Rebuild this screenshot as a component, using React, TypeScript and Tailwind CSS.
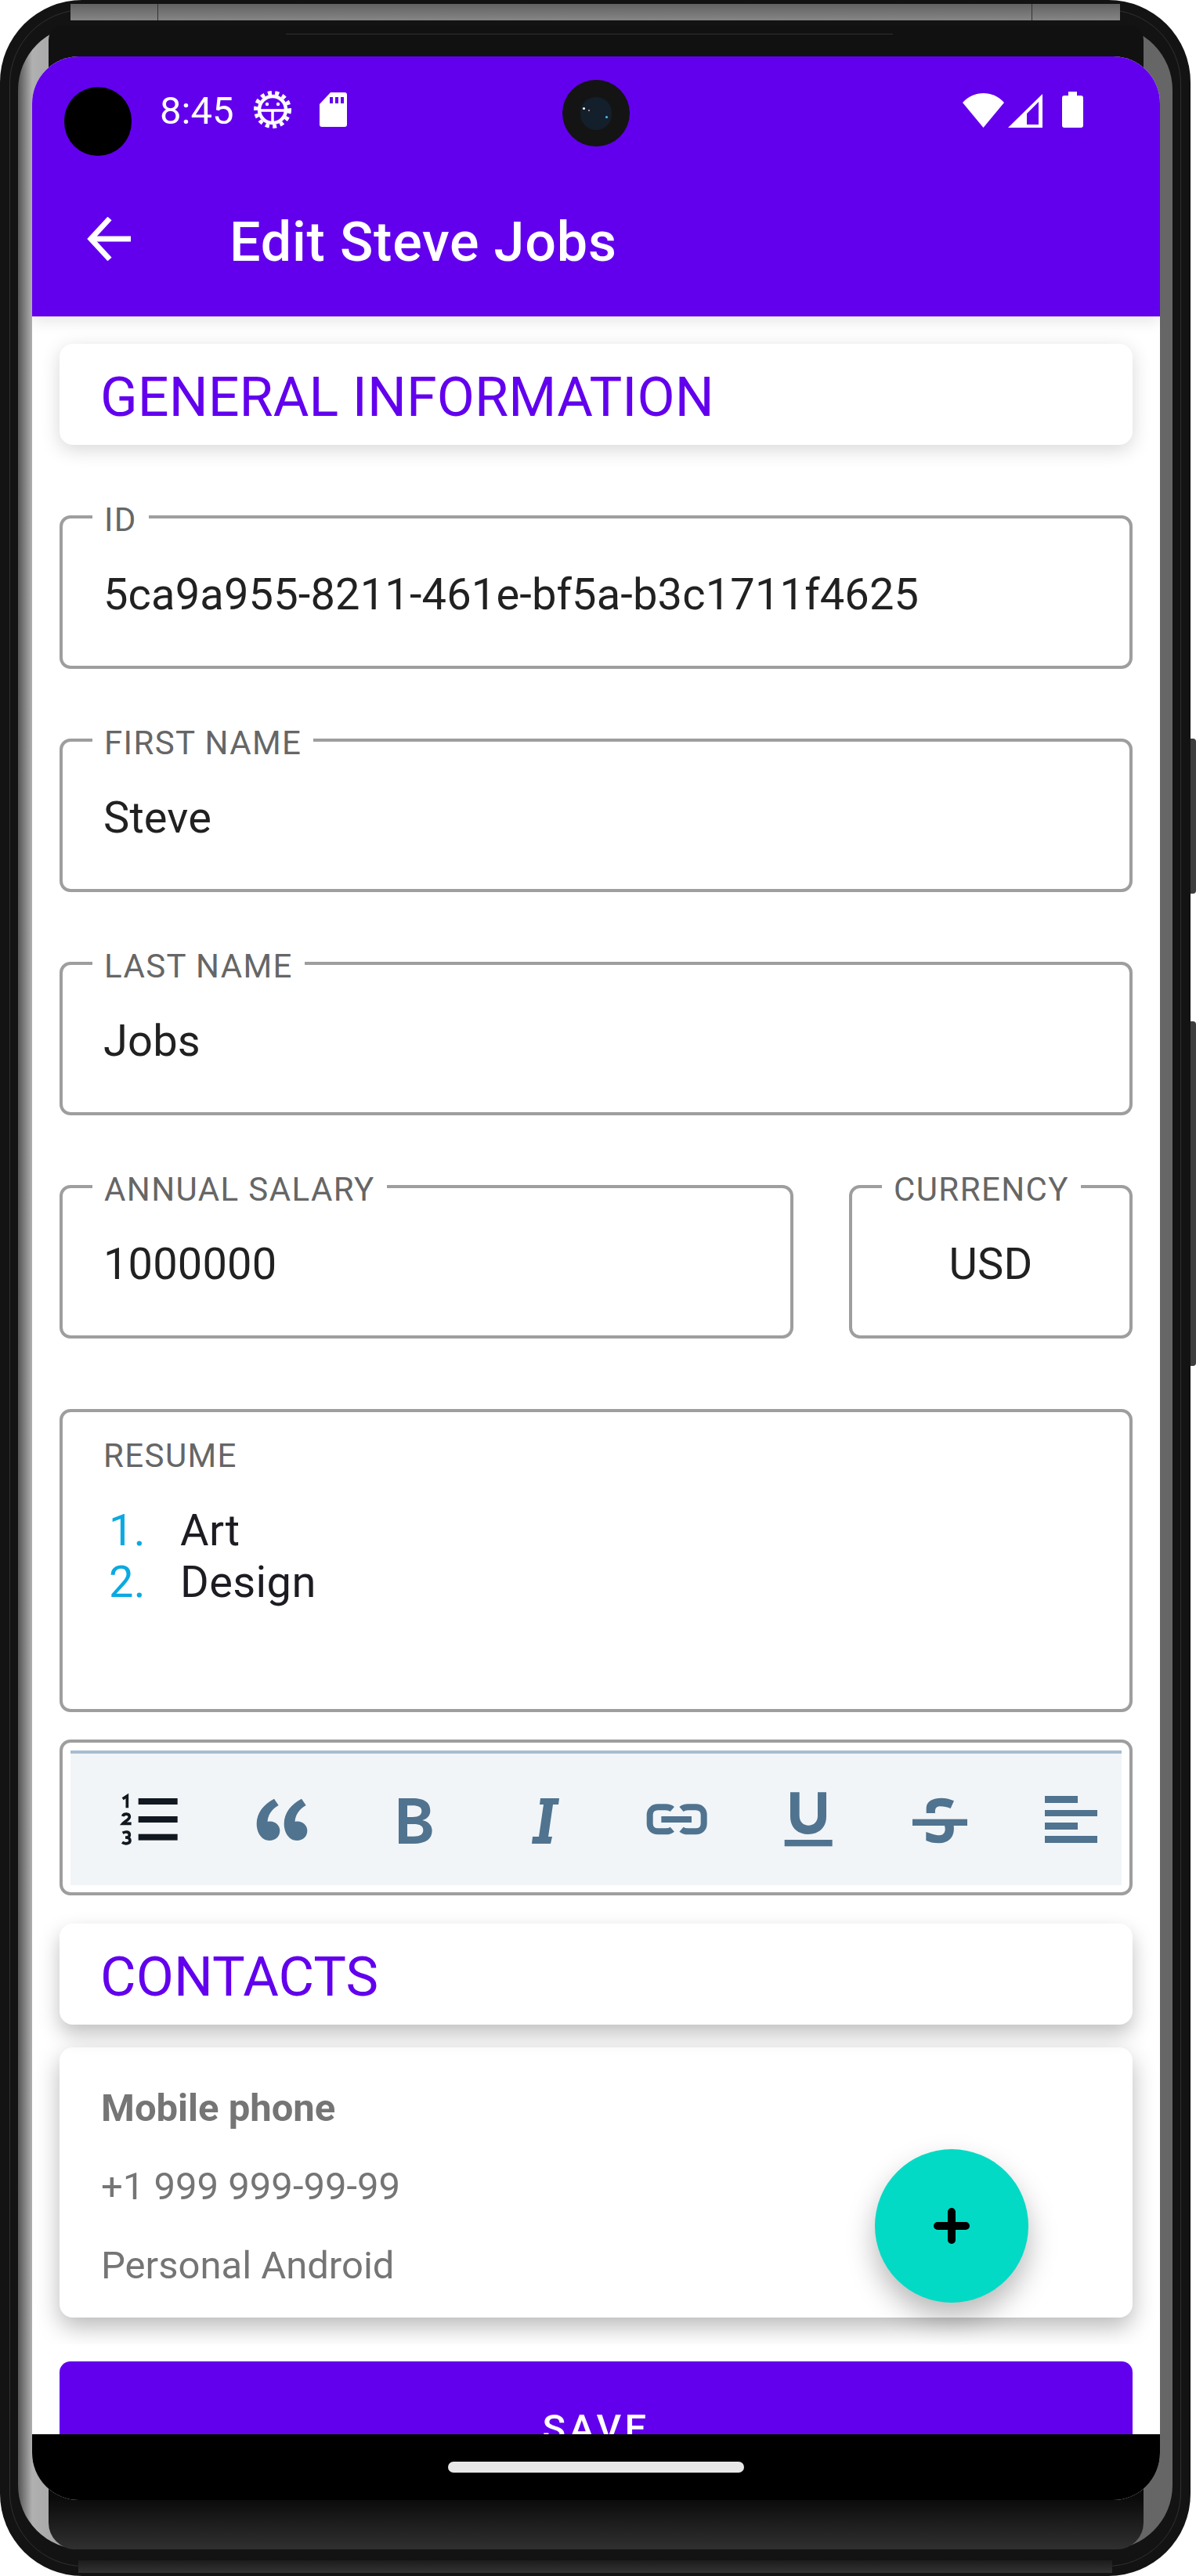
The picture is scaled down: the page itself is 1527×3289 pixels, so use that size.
const roboto = "font-['Roboto',sans-serif]";

function Field({ label, value, className = "", center = false }: { label: string; value: string; className?: string; center?: boolean }) {
  return (
    <div className={`relative h-[196px] rounded-[14px] border-4 border-[#9e9e9e] ${className}`}>
      <span className="absolute top-[-19px] left-[38px] bg-white px-[15px] text-[42px] leading-[42px] tracking-[1.4px] text-[#666666] whitespace-nowrap">
        {label}
      </span>
      <div className={`pt-[64px] text-[56px] leading-[66px] tracking-[0.15px] text-[#212121] ${center ? "text-center" : "pl-[52px]"}`}>
        {value}
      </div>
    </div>
  );
}

function SectionTitle({ children, className = "" }: { children: string; className?: string }) {
  return (
    <div className={`h-[129px] rounded-[17px] bg-white pl-[52px] pt-[4px] text-[70px] leading-[129px] tracking-[0.1px] text-[#6200ee] ${className}`}>
      {children}
    </div>
  );
}

function ToolIcon({ box, children }: { box: string; children: React.ReactNode }) {
  return (
    <div className="flex w-[168px] shrink-0 justify-center">
      <svg width="84" height="84" viewBox={box} fill="#50738f">
        {children}
      </svg>
    </div>
  );
}

function Toolbar() {
  return (
    <div className="mt-[35px] h-[199px] rounded-[14px] border-4 border-[#9e9e9e] px-[10px] pt-[10px]">
      <div className="flex h-[172px] overflow-hidden border-t-[4px] border-[#a7bdd0] bg-[#f1f5f8] pl-[18px] pt-[42px]">
        <ToolIcon box="60 63 252 252">
          <g fill="none" stroke="#111820" strokeWidth="11">
            <path d="M80 110 L97 99 V145" />
            <path d="M80 177 C84 165 106 165 106 179 C106 189 90 195 81 205 H113" />
            <path d="M80 241 C90 235 106 235 106 248 C106 257 94 258 90 258 C101 258 108 262 108 270 C108 283 88 284 78 277" />
          </g>
          <g fill="#111820">
            <rect x="140" y="108" width="150" height="24" />
            <rect x="140" y="177" width="150" height="24" />
            <rect x="140" y="245" width="150" height="24" />
          </g>
        </ToolIcon>
        <ToolIcon box="564 63 252 252">
          <path d="M660 110 L677 135 C650 150 635 175 635 198 C660 192 682 210 682 232 C682 255 665 270 642 270 C612 270 593 240 593 205 C593 165 620 130 660 110 Z" />
          <path d="M765 110 L782 135 C755 150 740 175 740 198 C765 192 787 210 787 232 C787 255 770 270 747 270 C717 270 698 240 698 205 C698 165 725 130 765 110 Z" />
        </ToolIcon>
        <ToolIcon box="1068 63 252 252">
          <path
            fillRule="evenodd"
            d="M1137 108 H1190 C1240 108 1258 128 1258 155 C1258 175 1245 187 1228 192 C1250 196 1265 212 1265 232 C1265 265 1240 282 1195 282 H1137 Z M1170 136 V180 H1190 C1215 180 1225 172 1225 157 C1225 142 1213 136 1190 136 Z M1170 207 V254 H1195 C1220 254 1231 245 1231 230 C1231 215 1220 207 1193 207 Z"
          />
        </ToolIcon>
        <ToolIcon box="654 2281 84 84">
          <path d="M690 2296 H714 L713 2304 H706 L700 2345 H705 L703 2354 H679 L680 2345 H688 L694 2304 H689 Z" />
        </ToolIcon>
        <ToolIcon box="96 63 252 252">
          <g fill="none" stroke="#50738f" strokeWidth="24">
            <path d="M205 150 C198 144 190 142 180 142 H150 C130 142 119 155 119 172 V205 C119 222 130 235 150 235 H180 C190 235 198 233 205 227" />
            <path d="M240 150 C247 144 255 142 265 142 H295 C315 142 326 155 326 172 V205 C326 222 315 235 295 235 H265 C255 235 247 233 240 227" />
          </g>
          <rect x="163" y="177" width="116" height="24" />
        </ToolIcon>
        <ToolIcon box="600 63 252 252">
          <path d="M657 85 H692 V175 C692 200 708 212 727 212 C746 212 762 200 762 175 V85 H795 V178 C795 222 765 246 726 246 C687 246 657 222 657 178 Z" />
          <rect x="635" y="267" width="183" height="25" />
        </ToolIcon>
        <ToolIcon box="1104 63 252 252">
          <rect x="1125" y="188" width="210" height="25" />
          <path d="M1178 165 V145 C1178 118 1205 107 1235 107 C1255 107 1270 112 1284 118 L1271 147 C1258 142 1245 139 1232 139 C1218 139 1210 145 1212 165 Z" />
          <path d="M1248 213 H1283 C1288 255 1265 280 1225 280 C1205 280 1190 276 1177 270 V237 C1195 243 1215 250 1228 250 C1245 250 1255 235 1248 213 Z" />
        </ToolIcon>
        <ToolIcon box="1326 2281 84 84">
          <rect x="1334" y="2293" width="42" height="9" />
          <rect x="1334" y="2311" width="67" height="8" />
          <rect x="1334" y="2327" width="42" height="9" />
          <rect x="1334" y="2344" width="67" height="9" />
        </ToolIcon>
      </div>
    </div>
  );
}

function StatusBar() {
  return (
    <div className="flex h-[48px] items-center pl-[163px] pr-[98px] text-[49px] text-white">
      <span className="w-[120px] pt-[3px] leading-[48px]">8:45</span>
      <svg width="48" height="48" viewBox="0 0 48 48" fill="none" stroke="white">
        <circle cx="24" cy="24" r="21.5" strokeWidth="5" strokeDasharray="5 4.45" />
        <circle cx="24" cy="24" r="17" strokeWidth="4.5" />
        <path d="M7 25 H41 M24 25 V41" strokeWidth="3.5" />
        <circle cx="17" cy="17" r="2.2" fill="white" stroke="none" />
        <circle cx="31" cy="17" r="2.2" fill="white" stroke="none" />
      </svg>
      <svg className="ml-[36px]" width="35" height="44" viewBox="0 0 35 44">
        <path
          fillRule="evenodd"
          fill="white"
          d="M14 0 H32 Q35 0 35 3 V41 Q35 44 32 44 H3 Q0 44 0 41 V15 Z M13 6 V14 H17 V6 Z M20 6 V14 H24 V6 Z M27 6 V14 H31 V6 Z"
        />
      </svg>
      <div className="ml-auto flex items-end">
        <svg width="53" height="44" viewBox="0 0 53 44">
          <path fill="white" d="M0 12 C14 -4 39 -4 53 12 L26.5 44 Z" />
        </svg>
        <svg className="ml-[5px]" width="44" height="43" viewBox="0 0 44 43">
          <path fillRule="evenodd" fill="white" d="M0 43 L44 0 V43 Z M24 25 V39 H39 V10 Z" />
        </svg>
        <svg className="ml-[25px]" width="27" height="46" viewBox="0 0 27 46">
          <path fill="white" d="M8 0 H19 V5 H24 Q27 5 27 8 V43 Q27 46 24 46 H3 Q0 46 0 43 V8 Q0 5 3 5 H8 Z" />
        </svg>
      </div>
    </div>
  );
}

function AppBar() {
  return (
    <header className="relative z-10 h-[332px] shrink-0 bg-[#6200ee] pt-[44px] shadow-[0_6px_18px_rgba(0,0,0,0.1)]">
      <StatusBar />
      <div className="absolute left-[41px] top-[39px] h-[88px] w-[86px] rounded-full bg-black" />
      <div className="absolute left-[677px] top-[30px] flex h-[85px] w-[86px] items-center justify-center rounded-full bg-[#141414]">
        <div className="relative h-[42px] w-[40px] rounded-full bg-[#13202b]">
          <span className="absolute left-[3px] top-[13px] h-[3px] w-[3px] rounded-full bg-white" />
          <span className="absolute left-[10px] top-[16px] h-[2px] w-[2px] rounded-full bg-[#e7a6c8]" />
          <span className="absolute left-[32px] top-[24px] h-[3px] w-[3px] rounded-full bg-[#4fc0f0]" />
        </div>
      </div>
      <div className="mt-[96px] flex items-start pl-[70px]">
        <svg className="mt-[17px]" width="56" height="56" viewBox="0 0 56 56" fill="none" stroke="white" strokeWidth="7">
          <path d="M56 28 H6" />
          <path d="M29 2 L5 28 L29 54" />
        </svg>
        <h1 className="ml-[126px] mt-[4px] text-[70px] font-medium leading-[90px] tracking-[0.8px] text-white">Edit Steve Jobs</h1>
      </div>
    </header>
  );
}

function Content() {
  return (
    <main className="flex-1 overflow-hidden bg-white px-[35px] pt-[35px]">
      <SectionTitle className="shadow-[0_6px_24px_rgba(0,0,0,0.16)]">GENERAL INFORMATION</SectionTitle>
      <div className="mt-[90px] flex flex-col gap-[89px]">
        <Field label="ID" value="5ca9a955-8211-461e-bf5a-b3c1711f4625" />
        <Field label="FIRST NAME" value="Steve" />
        <Field label="LAST NAME" value="Jobs" />
        <div className="flex gap-[71px]">
          <Field label="ANNUAL SALARY" value="1000000" className="w-[937px]" />
          <Field label="CURRENCY" value="USD" className="w-[362px]" center />
        </div>
      </div>
      <div className="mt-[90px] h-[387px] rounded-[14px] border-4 border-[#9e9e9e] pl-[52px] pt-[35px]">
        <div className="text-[42px] leading-[42px] tracking-[1.4px] text-[#666666]">RESUME</div>
        <ol className="ml-[7px] mt-[41px] text-[56px] leading-[66px] tracking-[0.4px] text-[#1c1c22]">
          <li className="flex">
            <span className="w-[91px] text-[#0ba9e1]">1.</span>Art
          </li>
          <li className="flex">
            <span className="w-[91px] text-[#0ba9e1]">2.</span>Design
          </li>
        </ol>
      </div>
      <Toolbar />
      <SectionTitle className="relative z-[1] mt-[36px] shadow-[0_12px_26px_rgba(0,0,0,0.25)]">CONTACTS</SectionTitle>
      <div className="mx-[-35px] h-[408px] overflow-hidden px-[35px] pt-[29px]">
        <div className="h-[345px] rounded-[17px] bg-white pl-[53px] pt-[28px] text-[49px] leading-[100px] text-[#757575] shadow-[0_12px_30px_rgba(0,0,0,0.28)]">
          <div className="font-bold">Mobile phone</div>
          <div>+1 999 999-99-99</div>
          <div className="pt-[1px]">Personal Android</div>
        </div>
      </div>
      <button className="mt-[22px] h-[171px] w-full rounded-[14px] bg-[#6200ee] text-[49px] font-medium tracking-[4.4px] text-white">
        SAVE
      </button>
    </main>
  );
}

export default function App() {
  return (
    <div className={`relative h-[3289px] w-[1527px] overflow-hidden bg-white ${roboto}`}>
      {/* side buttons */}
      <div className="absolute right-0 top-[943px] h-[198px] w-[12px] rounded-r-[4px] bg-[#3d3d3d]" />
      <div className="absolute right-0 top-[1304px] h-[440px] w-[12px] rounded-r-[4px] bg-[#3d3d3d]" />

      {/* phone body */}
      <div className="relative h-[3289px] w-[1520px] rounded-[105px] bg-[#131313]">
        <div className="absolute inset-[12px] rounded-[95px] border border-[#303030]" />
        <div className="absolute left-[90px] right-[90px] top-[5px] h-[21px] bg-[linear-gradient(to_bottom,#626262,#858585)]" />
        <div className="absolute left-[201px] top-[5px] h-[21px] w-px bg-[#333333]" />
        <div className="absolute left-[1317px] top-[5px] h-[21px] w-px bg-[#333333]" />
        <div className="absolute bottom-[4px] left-[100px] right-[100px] h-[16px] bg-[linear-gradient(to_bottom,#1c1c1c,#333333)]" />

        {/* metal ring */}
        <div className="absolute bottom-[34px] left-[23px] right-[23px] top-[33px] rounded-[82px] bg-[linear-gradient(to_right,#555555_0,#b0b0b0_18px,#a4a4a4_60px,#666666_60px,#666666_100%)]" />

        {/* bezel */}
        <div className="absolute left-[62px] right-[60px] top-[33px] h-[100px] rounded-tl-[18px] rounded-tr-[18px] bg-[#111111]" />
        <div className="absolute left-[365px] top-[43px] h-px w-[775px] bg-[#303030]" />
        <div className="absolute bottom-[34px] left-[62px] right-[60px] h-[120px] rounded-b-[34px] bg-[linear-gradient(to_bottom,#0a0a0a_45%,#303030_100%)]" />

        {/* screen */}
        <div className="absolute left-[41px] top-[72px] flex h-[3120px] w-[1440px] flex-col overflow-hidden rounded-[60px] bg-white">
          <AppBar />
          <Content />
          <div className="z-10 flex h-[84px] shrink-0 items-center justify-center bg-black">
            <div className="h-[14px] w-[378px] rounded-full bg-[#e8e8e8]" />
          </div>
          <button className="absolute left-[1076px] top-[2672px] z-[5] flex h-[196px] w-[196px] items-center justify-center rounded-full bg-[#03dac5] shadow-[0_18px_36px_rgba(0,0,0,0.28)]">
            <svg width="46" height="46" viewBox="0 0 46 46" stroke="black" strokeWidth="10" strokeLinecap="round">
              <path d="M23 5 V41 M5 23 H41" />
            </svg>
          </button>
        </div>
      </div>
    </div>
  );
}
